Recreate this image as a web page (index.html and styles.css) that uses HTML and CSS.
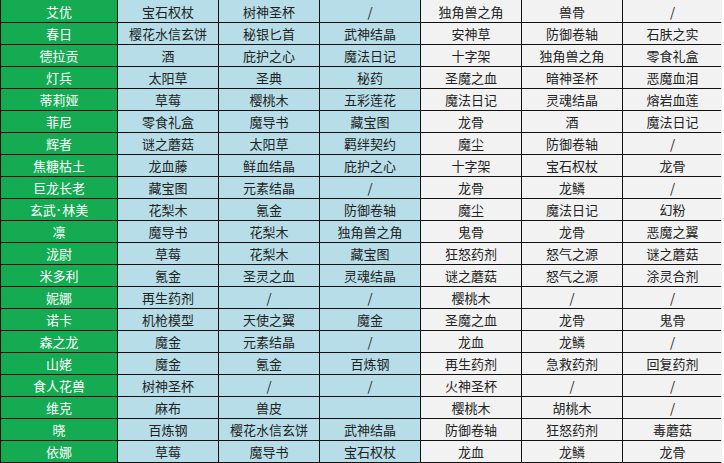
FILE: index.html
```html
<!DOCTYPE html>
<html lang="zh-CN">
<head>
<meta charset="utf-8">
<title>材料表</title>
<link rel="stylesheet" href="styles.css">
</head>
<body>
<div class="sheet">
  <div class="row"><div class="c name">艾优</div><div class="c b">宝石权杖</div><div class="c b">树神圣杯</div><div class="c b">/</div><div class="c w">独角兽之角</div><div class="c w">兽骨</div><div class="c w">/</div></div>
  <div class="row"><div class="c name">春日</div><div class="c b">樱花水信玄饼</div><div class="c b">秘银匕首</div><div class="c b">武神结晶</div><div class="c w">安神草</div><div class="c w">防御卷轴</div><div class="c w">石肤之实</div></div>
  <div class="row"><div class="c name">德拉贡</div><div class="c b">酒</div><div class="c b">庇护之心</div><div class="c b">魔法日记</div><div class="c w">十字架</div><div class="c w">独角兽之角</div><div class="c w">零食礼盒</div></div>
  <div class="row"><div class="c name">灯兵</div><div class="c b">太阳草</div><div class="c b">圣典</div><div class="c b">秘药</div><div class="c w">圣魔之血</div><div class="c w">暗神圣杯</div><div class="c w">恶魔血泪</div></div>
  <div class="row"><div class="c name">蒂莉娅</div><div class="c b">草莓</div><div class="c b">樱桃木</div><div class="c b">五彩莲花</div><div class="c w">魔法日记</div><div class="c w">灵魂结晶</div><div class="c w">熔岩血莲</div></div>
  <div class="row"><div class="c name">菲尼</div><div class="c b">零食礼盒</div><div class="c b">魔导书</div><div class="c b">藏宝图</div><div class="c w">龙骨</div><div class="c w">酒</div><div class="c w">魔法日记</div></div>
  <div class="row"><div class="c name">辉者</div><div class="c b">谜之蘑菇</div><div class="c b">太阳草</div><div class="c b">羁绊契约</div><div class="c w">魔尘</div><div class="c w">防御卷轴</div><div class="c w">/</div></div>
  <div class="row"><div class="c name">焦糖枯土</div><div class="c b">龙血藤</div><div class="c b">鲜血结晶</div><div class="c b">庇护之心</div><div class="c w">十字架</div><div class="c w">宝石权杖</div><div class="c w">龙骨</div></div>
  <div class="row"><div class="c name">巨龙长老</div><div class="c b">藏宝图</div><div class="c b">元素结晶</div><div class="c b">/</div><div class="c w">龙骨</div><div class="c w">龙鳞</div><div class="c w">/</div></div>
  <div class="row"><div class="c name">玄武<span class="dot">·</span>林美</div><div class="c b">花梨木</div><div class="c b">氪金</div><div class="c b">防御卷轴</div><div class="c w">魔尘</div><div class="c w">魔法日记</div><div class="c w">幻粉</div></div>
  <div class="row"><div class="c name">凛</div><div class="c b">魔导书</div><div class="c b">花梨木</div><div class="c b">独角兽之角</div><div class="c w">鬼骨</div><div class="c w">龙骨</div><div class="c w">恶魔之翼</div></div>
  <div class="row"><div class="c name">泷尉</div><div class="c b">草莓</div><div class="c b">花梨木</div><div class="c b">藏宝图</div><div class="c w">狂怒药剂</div><div class="c w">怒气之源</div><div class="c w">谜之蘑菇</div></div>
  <div class="row"><div class="c name">米多利</div><div class="c b">氪金</div><div class="c b">圣灵之血</div><div class="c b">灵魂结晶</div><div class="c w">谜之蘑菇</div><div class="c w">怒气之源</div><div class="c w">涂灵合剂</div></div>
  <div class="row"><div class="c name">妮娜</div><div class="c b">再生药剂</div><div class="c b">/</div><div class="c b">/</div><div class="c w">樱桃木</div><div class="c w">/</div><div class="c w">/</div></div>
  <div class="row"><div class="c name">诺卡</div><div class="c b">机枪模型</div><div class="c b">天使之翼</div><div class="c b">魔金</div><div class="c w">圣魔之血</div><div class="c w">龙骨</div><div class="c w">鬼骨</div></div>
  <div class="row"><div class="c name">森之龙</div><div class="c b">魔金</div><div class="c b">元素结晶</div><div class="c b">/</div><div class="c w">龙血</div><div class="c w">龙鳞</div><div class="c w">/</div></div>
  <div class="row"><div class="c name">山姥</div><div class="c b">魔金</div><div class="c b">氪金</div><div class="c b">百炼钢</div><div class="c w">再生药剂</div><div class="c w">急救药剂</div><div class="c w">回复药剂</div></div>
  <div class="row"><div class="c name">食人花兽</div><div class="c b">树神圣杯</div><div class="c b">/</div><div class="c b">/</div><div class="c w">火神圣杯</div><div class="c w">/</div><div class="c w">/</div></div>
  <div class="row"><div class="c name">维克</div><div class="c b">麻布</div><div class="c b">兽皮</div><div class="c b"></div><div class="c w">樱桃木</div><div class="c w">胡桃木</div><div class="c w">/</div></div>
  <div class="row"><div class="c name">晓</div><div class="c b">百炼钢</div><div class="c b">樱花水信玄饼</div><div class="c b">武神结晶</div><div class="c w">防御卷轴</div><div class="c w">狂怒药剂</div><div class="c w">毒蘑菇</div></div>
  <div class="row"><div class="c name">依娜</div><div class="c b">草莓</div><div class="c b">魔导书</div><div class="c b">宝石权杖</div><div class="c w">龙血</div><div class="c w">龙鳞</div><div class="c w">龙骨</div></div>
</div>
</body>
</html>
```

FILE: styles.css
```css
html, body {
  margin: 0;
  padding: 0;
  background: #ffffff;
}

.sheet {
  display: grid;
  grid-template-columns: 116px repeat(5, 100px) 99px;
  grid-template-rows: 22px repeat(20, 21px);
  gap: 1px;
  width: 722px;
  padding: 0 0 1px 1px;
  box-sizing: border-box;
  background: #111111;
  border-right: 1px solid #dcdcdc;
  font-family: "Noto Sans CJK SC", "Microsoft YaHei", sans-serif;
  font-size: 13px;
}

.row {
  display: contents;
}

.c {
  display: flex;
  align-items: center;
  justify-content: center;
  white-space: nowrap;
  color: #222222;
  line-height: 1;
}

.name {
  background: #14ab52;
  color: #ffffff;
}

.dot {
  font-family: "Liberation Sans", sans-serif;
  font-weight: bold;
  padding: 0 1px;
}

.b {
  background: #b7dee8;
}

.w {
  background: #f2f2f2;
}
```
